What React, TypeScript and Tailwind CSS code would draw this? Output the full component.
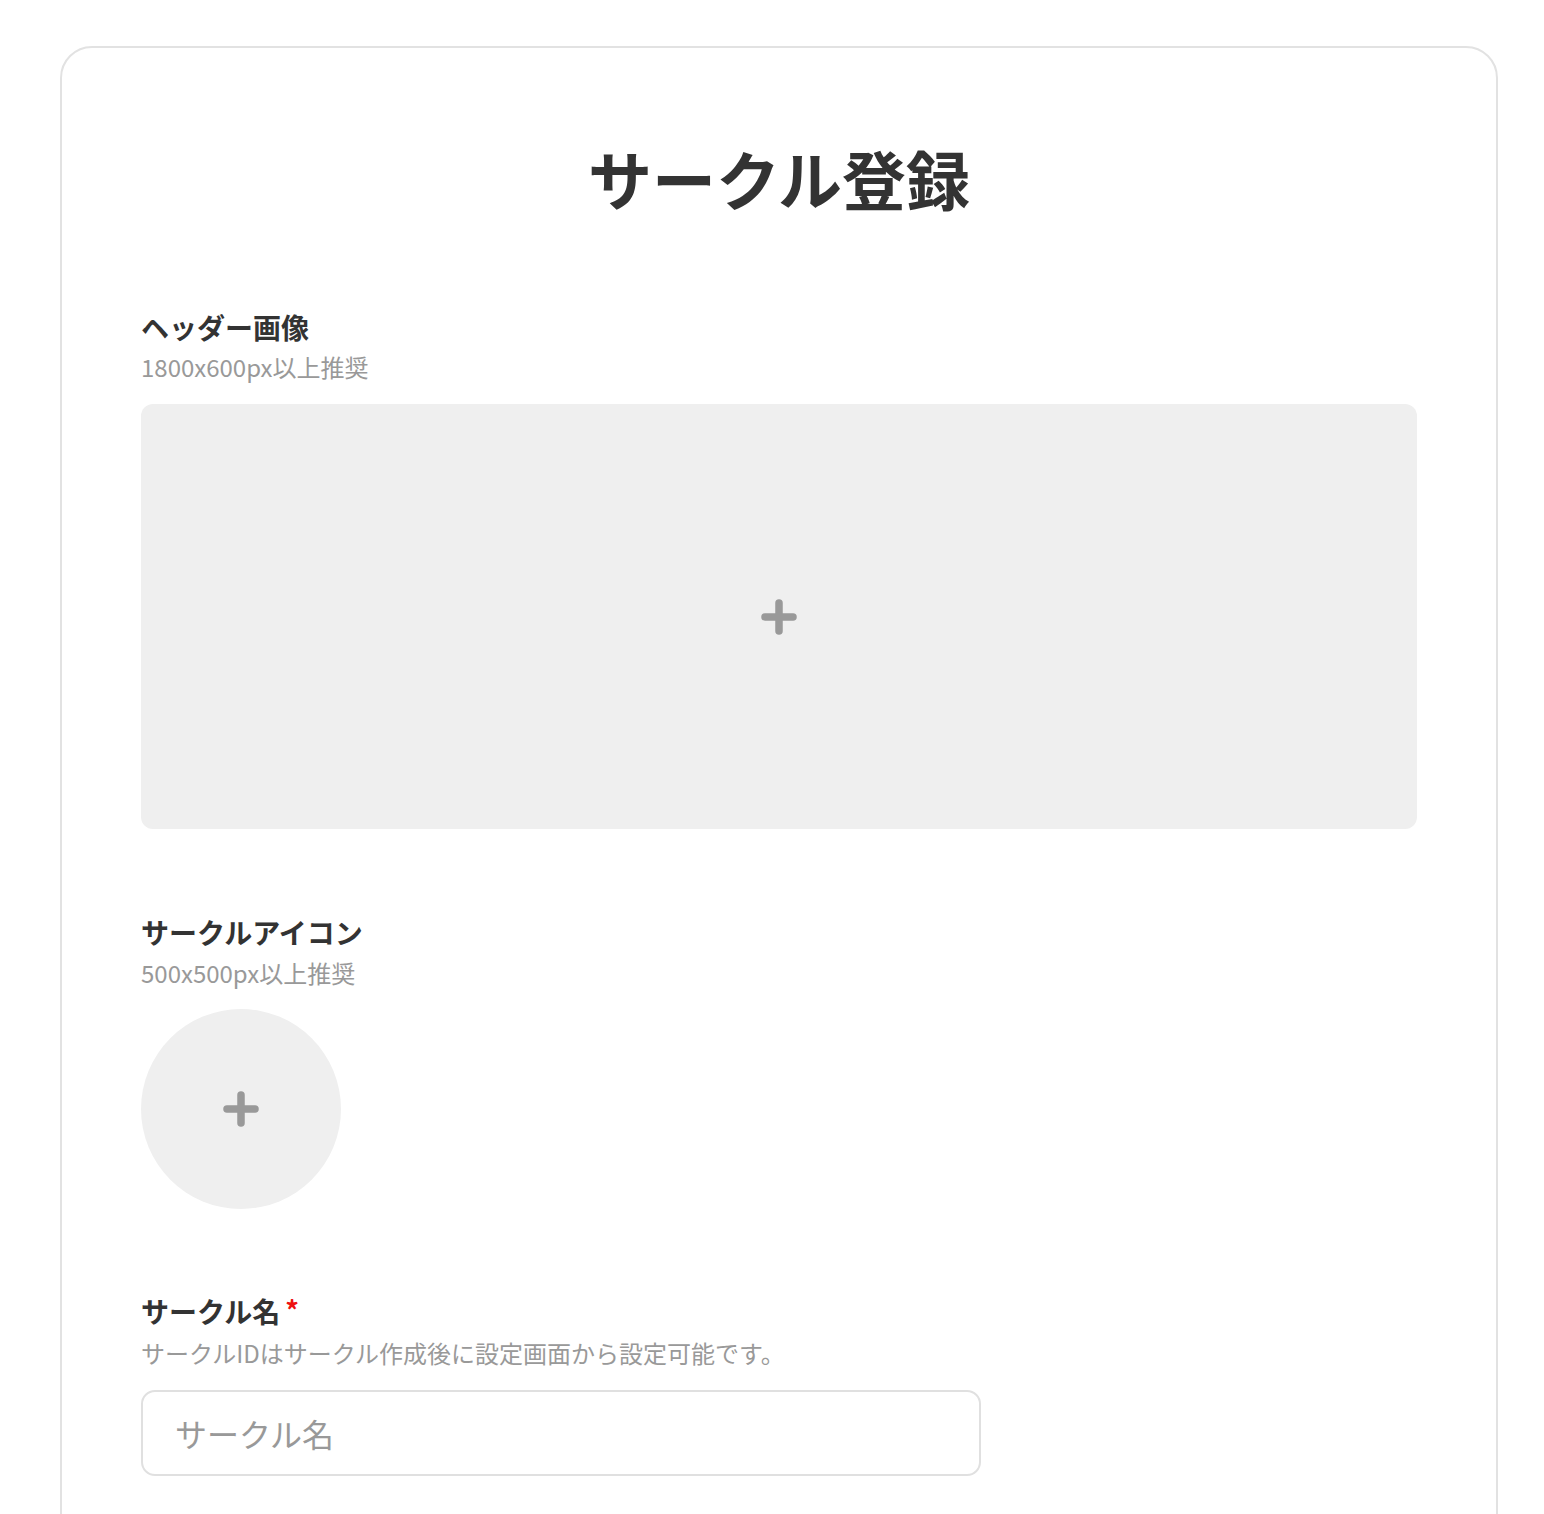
import React from "react";

const font = { fontFamily: '"Noto Sans CJK JP", "Noto Sans", sans-serif' };

function Plus() {
  return (
    <svg width="36" height="36" viewBox="0 0 36 36" fill="none">
      <line x1="18" y1="4" x2="18" y2="32" stroke="#999999" strokeWidth="7.5" strokeLinecap="round" />
      <line x1="4" y1="18" x2="32" y2="18" stroke="#999999" strokeWidth="7.5" strokeLinecap="round" />
    </svg>
  );
}

export default function App() {
  return (
    <div className="min-h-[1514px] bg-white" style={font}>
      <div className="pt-[46px] pl-[60px]">
        <div className="w-[1438px] min-h-[1500px] rounded-[32px] border-2 border-[#e2e2e2] px-[79px] pt-[81px] pb-20">
          <h1 className="text-center text-[64px] leading-[96px] font-bold text-[#333333]">サークル登録</h1>

          <div className="mt-[82px]">
            <div className="text-[28px] leading-[40px] font-bold text-[#333333]">ヘッダー画像</div>
            <div className="mt-[2px] text-[24px] leading-[36px] text-[#999999]">1800x600px以上推奨</div>
            <button className="mt-[19px] flex h-[425px] w-full items-center justify-center rounded-[12px] bg-[#efefef]">
              <Plus />
            </button>
          </div>

          <div className="mt-[83px]">
            <div className="text-[28px] leading-[40px] font-bold text-[#333333]">サークルアイコン</div>
            <div className="mt-[3px] text-[24px] leading-[36px] text-[#999999]">500x500px以上推奨</div>
            <button className="mt-[18px] flex h-[200px] w-[200px] items-center justify-center rounded-full bg-[#efefef]">
              <Plus />
            </button>
          </div>

          <div className="mt-[82px]">
            <div className="flex items-start text-[28px] leading-[40px] font-bold text-[#333333]">
              サークル名<span className="ml-[5px] mt-[4px] text-[27px] leading-[30px] font-bold text-[#ee1111]">*</span>
            </div>
            <div className="mt-[4px] text-[24px] leading-[36px] text-[#999999]">サークルIDはサークル作成後に設定画面から設定可能です。</div>
            <input
              className="mt-[19px] block h-[86px] w-[840px] rounded-[14px] border-2 border-[#e0e0e0] px-[32px] text-[32px] text-[#333333] placeholder:text-[#999999] outline-none"
              placeholder="サークル名"
              style={font}
            />
          </div>
        </div>
      </div>
    </div>
  );
}
